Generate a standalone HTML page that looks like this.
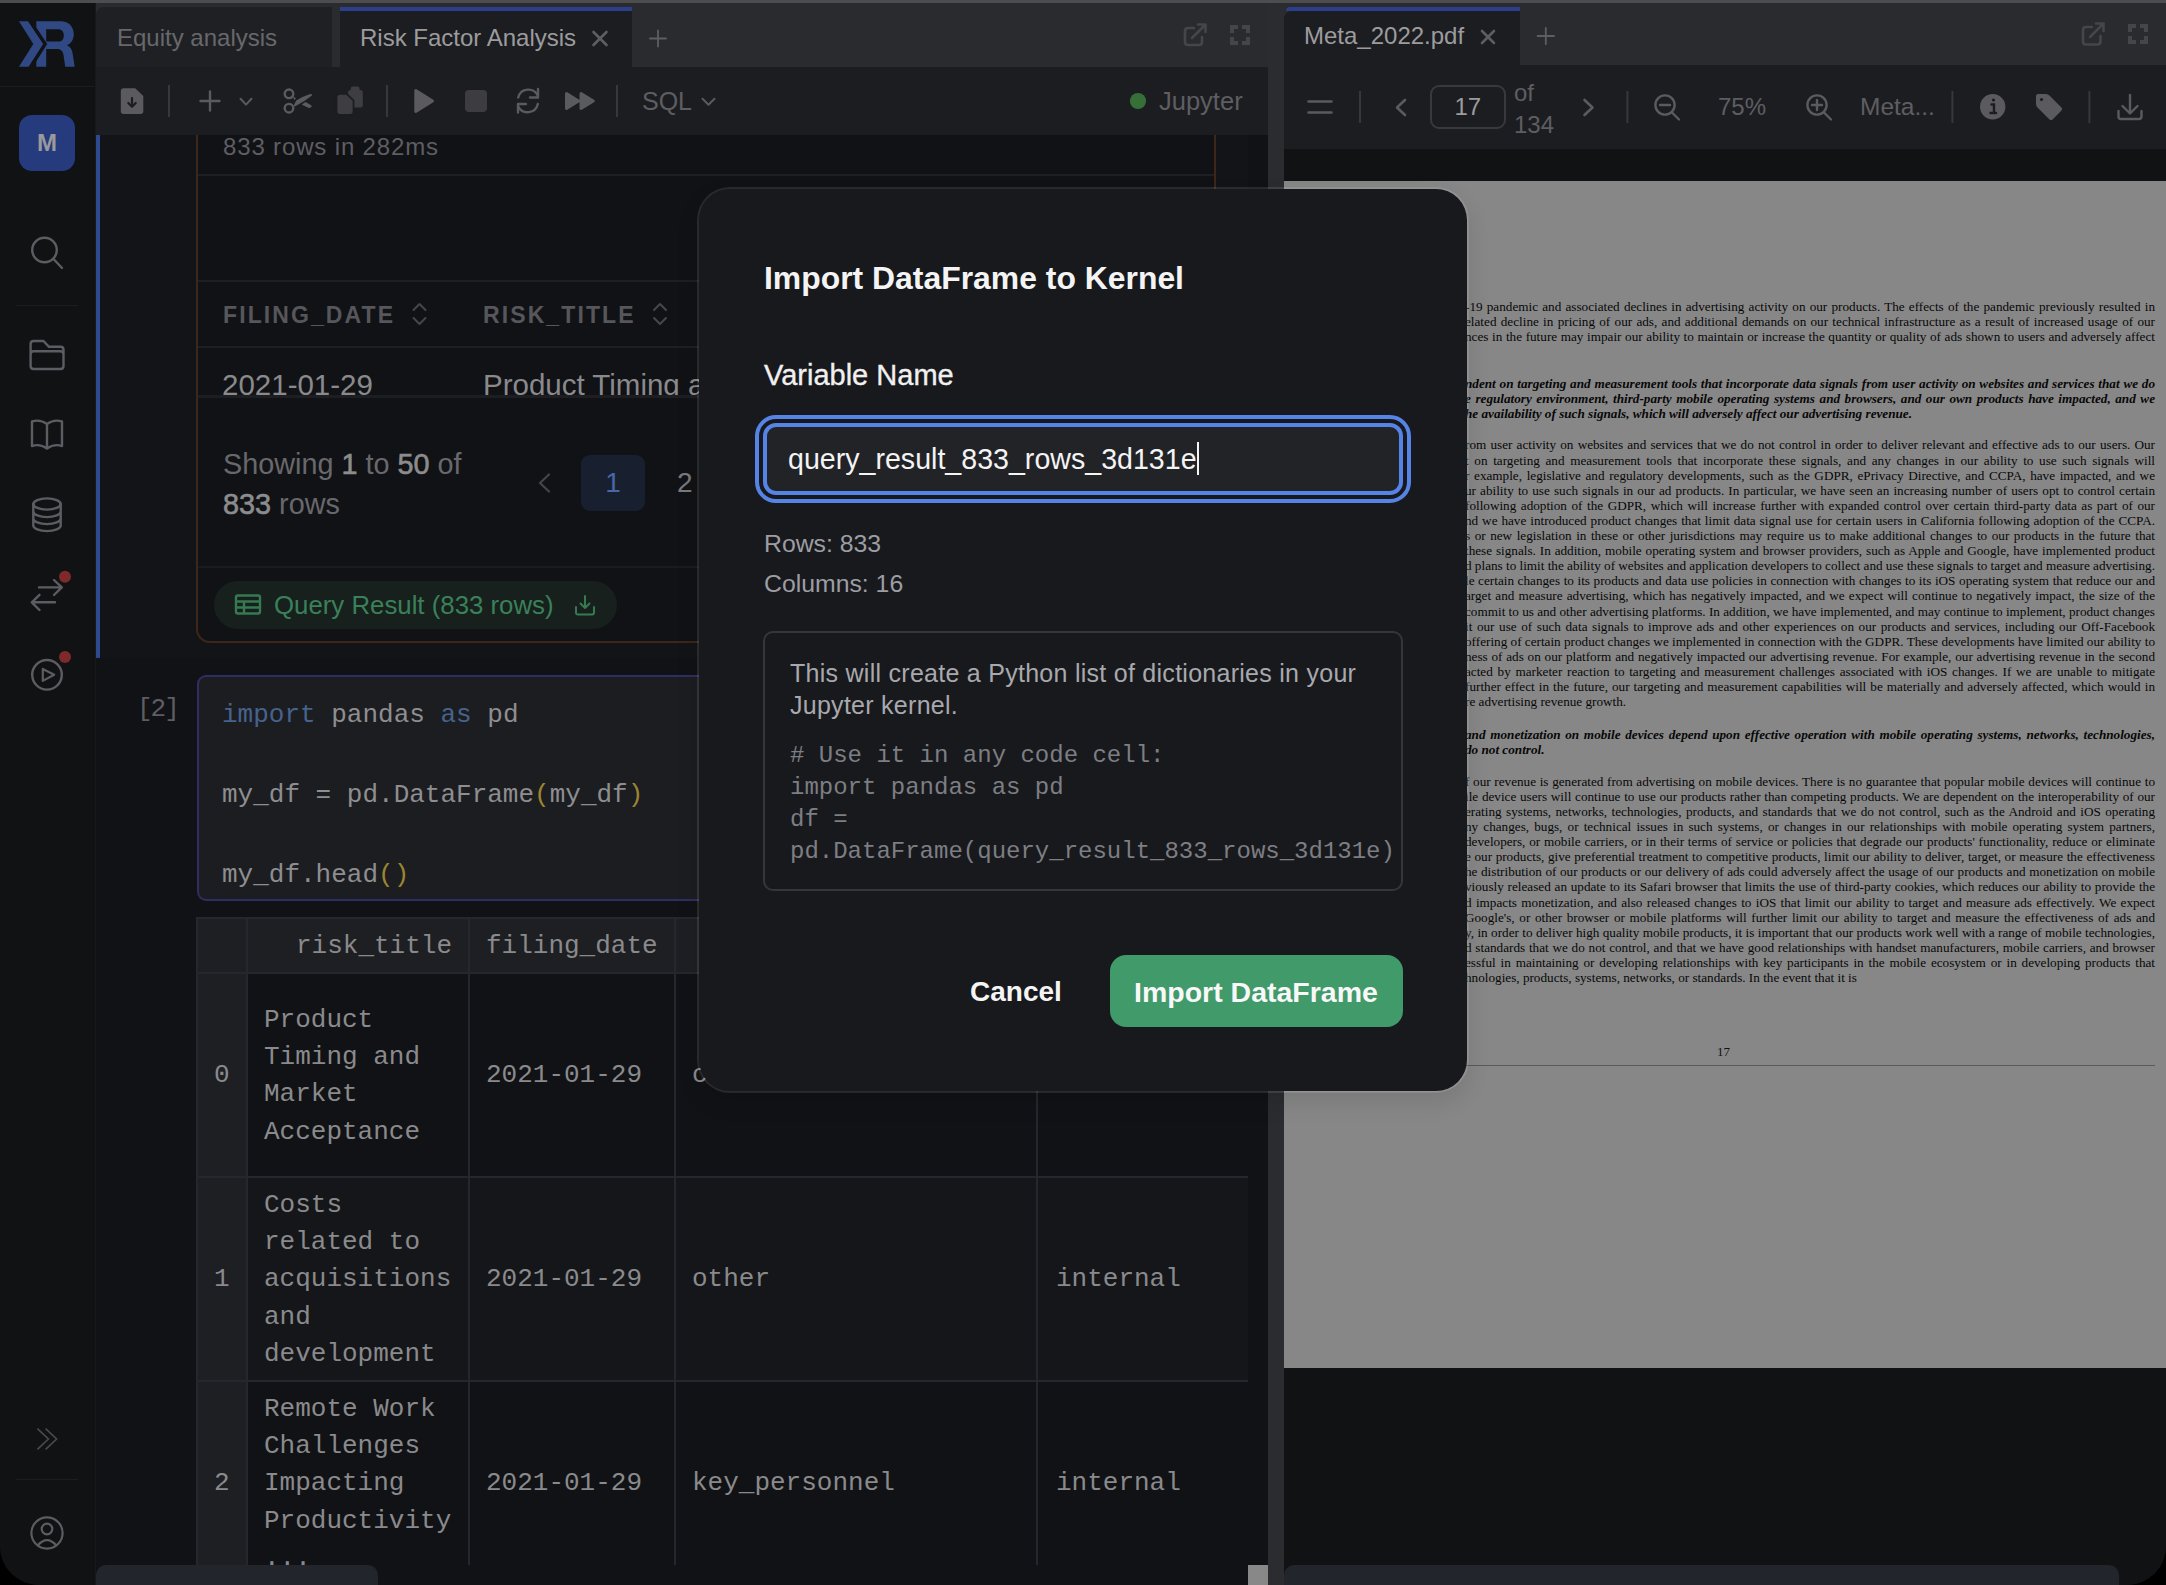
<!DOCTYPE html>
<html><head><meta charset="utf-8">
<style>
*{box-sizing:border-box;margin:0;padding:0}
html,body{width:2166px;height:1585px;overflow:hidden;background:#000;font-family:"Liberation Sans",sans-serif}
.a{position:absolute}
.mono{font-family:"Liberation Mono",monospace}
.serif{font-family:"Liberation Serif",serif}
svg{position:absolute;overflow:visible}
#win{position:absolute;left:0;top:0;width:2166px;height:1585px;background:#111214;border-radius:0 0 39px 39px;overflow:hidden}
.pdfl{position:absolute;left:1465px;width:690px;height:15px;word-spacing:-1px;font:13.2px/15px "Liberation Serif",serif;color:#080808;white-space:normal;text-align:justify;text-align-last:justify}
.pdfl.e{text-align-last:left;text-align:left;word-spacing:0}
.pdfl.bi{font-weight:bold;font-style:italic}
.dt{position:absolute;font:26px/37.4px "Liberation Mono",monospace;color:#8a8a8c;white-space:pre}
</style></head><body>
<div id="win">
 <!-- top strip -->
 <div class="a" style="left:0;top:0;width:2166px;height:3px;background:#4d4d4f"></div>
 <!-- SIDEBAR -->
 <div class="a" style="left:0;top:3px;width:96px;height:1582px;background:#111214;border-right:1px solid #18191c"></div>
 <div class="a" style="left:0;top:86px;width:94px;height:1px;background:#1c1d20"></div>
 <div class="a" style="left:16px;top:305px;width:62px;height:1px;background:#1c1d20"></div>
 <div class="a" style="left:16px;top:1479px;width:62px;height:1px;background:#1c1d20"></div>
 <svg width="96" height="1585" style="left:0;top:0">
  <g fill="#304884">
   <path d="M19.05,21.26 H27.9 L42.9,44 L28.55,66.76 H19.05 L33.4,44 Z" stroke="#111214" stroke-width="7" paint-order="stroke" stroke-linejoin="miter"/>
  </g>
  <path fill="#304884" fill-rule="evenodd" d="M36.3,21.26 H60.8 C68.5,21.26 73.8,26.5 73.8,34.2 C73.8,39.8 70.8,43.5 67,45.3 C70.6,47.2 72.3,50 72.7,54 L74.7,66.76 H65.2 L63.6,55.5 C63.1,51.3 61,49.1 57.2,49.1 H46.2 V66.76 H36.3 Z M46.2,29.2 H58.3 C61.8,29.2 63.8,31.6 63.8,35.4 C63.8,39.3 61.8,41.6 58.3,41.6 H46.2 Z"/>
  <path d="M19.05,21.26 H27.9 L42.9,44 L28.55,66.76 H19.05 L33.4,44 Z" fill="none" stroke="#111214" stroke-width="3.6" transform="translate(2.2,0)"/>
  <path d="M19.05,21.26 H27.9 L42.9,44 L28.55,66.76 H19.05 L33.4,44 Z" fill="#304884"/>
  <rect x="19" y="115" width="56" height="56" rx="13" fill="#263a7e"/>
  <g fill="none" stroke="#5c5c62" stroke-width="2.4" stroke-linecap="round" stroke-linejoin="round">
   <circle cx="44.5" cy="250" r="12.3"/>
   <path d="M53.5,259 L62,268"/>
   <path d="M30.6,366 V344 Q30.6,341 33.6,341 H43.5 L49,346.8 H60.5 Q63.5,346.8 63.5,349.8 V366 Q63.5,369 60.5,369 H33.6 Q30.6,369 30.6,366 Z M30.6,354.3 Q30.6,351.3 33.6,351.3 H60.5 Q63.5,351.3 63.5,354.3"/>
   <path d="M32,421.5 V446 Q40,443.5 47,448.5 Q54,443.5 62,446 V421.5 Q54,419 47,424 Q40,419 32,421.5 Z M47,424 V448"/>
   <ellipse cx="47" cy="504" rx="13.7" ry="5.6"/>
   <path d="M33.3,504 V525.5 M60.7,504 V525.5 M33.3,511.5 A13.7,5.6 0 0 0 60.7,511.5 M33.3,518.5 A13.7,5.6 0 0 0 60.7,518.5 M33.3,525.5 A13.7,5.6 0 0 0 60.7,525.5"/>
   <path d="M39,587.4 H61.5 M54,580 L61.8,587.4 L54,595 M31.8,602.3 H55 M39.5,594.8 L31.8,602.3 L39.5,610"/>
   <circle cx="47" cy="674.8" r="14.8"/>
   <path d="M42.8,668.9 L54.2,674.8 L42.8,680.9 Z" stroke-width="2.2"/>
   <circle cx="47" cy="1533" r="15.6" stroke-width="2.2"/>
   <circle cx="47" cy="1529" r="5.3" stroke-width="2.2"/>
   <path d="M37.8,1545.3 Q47,1535 56.2,1545.3" stroke-width="2.2"/>
  </g>
  <path d="M37.4,1428.7 L48.4,1439 L37.4,1449.3 M45.6,1428.7 L56.6,1439 L45.6,1449.3" fill="none" stroke="#4a4a50" stroke-width="1.6"/>
  <circle cx="65" cy="576.8" r="6" fill="#7e2a2a"/>
  <circle cx="65" cy="657" r="6" fill="#7e2a2a"/>
 </svg>
 <div class="a" style="left:19px;top:115px;width:56px;height:56px;line-height:56px;text-align:center;font:bold 24px/56px 'Liberation Sans',sans-serif;color:#9a9a9c">M</div>

 <!-- LEFT PANE -->
 <div class="a" style="left:96px;top:3px;width:1172px;height:64px;background:#2a2b2f"></div>
 <div class="a" style="left:96px;top:67px;width:1172px;height:68px;background:#1c1d20"></div>
 <div class="a" style="left:96px;top:135px;width:1172px;height:1450px;background:#121316"></div>
 <!-- RIGHT PANE -->
 <div class="a" style="left:1284px;top:3px;width:882px;height:62px;background:#2a2b2f"></div>
 <div class="a" style="left:1284px;top:65px;width:882px;height:84px;background:#1c1d20"></div>
 <div class="a" style="left:1284px;top:149px;width:882px;height:1436px;background:#111214"></div>
 <div class="a" style="left:1284px;top:181px;width:882px;height:1187px;background:#878787"></div>
 <!-- left tabs -->
 <div class="a" style="left:96px;top:7px;width:236px;height:60px;background:#1f2024;border-top-left-radius:8px"></div>
 <div class="a" style="left:117px;top:23px;font-size:24px;line-height:30px;color:#68686c;white-space:nowrap">Equity analysis</div>
 <div class="a" style="left:340px;top:11px;width:292px;height:56px;background:#1c1d21"></div>
 <div class="a" style="left:340px;top:7px;width:292px;height:4px;background:#2b3f8c"></div>
 <div class="a" style="left:360px;top:23px;font-size:24px;line-height:30px;color:#9c9c9e;white-space:nowrap">Risk Factor Analysis</div>
 <svg width="2166" height="200" style="left:0;top:0">
  <g fill="none" stroke="#5e5e62" stroke-linecap="round">
   <path d="M593.5,32 L606.5,45 M606.5,32 L593.5,45" stroke-width="2.6"/>
   <path d="M650,38.5 H666 M658,30.5 V46.5" stroke-width="1.8"/>
   <path d="M1537.6,36 H1554 M1545.8,27.8 V44.2" stroke-width="1.8"/>
   <path d="M1482,31 L1494,43 M1494,31 L1482,43" stroke-width="2.2"/>
  </g>
  <!-- popout / fullscreen left -->
  <g fill="none" stroke="#464649" stroke-width="2.6" stroke-linecap="round" stroke-linejoin="round">
   <path d="M1194,28 H1188 Q1185,28 1185,31 V42 Q1185,45 1188,45 H1199 Q1202,45 1202,42 V37"/>
   <path d="M1192,38 L1205,25 M1198,24.5 H1205.5 V32"/>
   <path d="M2092,27 H2086 Q2083,27 2083,30 V41.5 Q2083,44.5 2086,44.5 H2097.5 Q2100.5,44.5 2100.5,41.5 V36"/>
   <path d="M2090,37 L2103,24 M2096,23.5 H2103.5 V31"/>
  </g>
  <g fill="#464649">
   <path d="M1230,25 H1238 V29 H1234 V33 H1230 Z M1250,25 H1242 V29 H1246 V33 H1250 Z M1230,45 H1238 V41 H1234 V37 H1230 Z M1250,45 H1242 V41 H1246 V37 H1250 Z"/>
   <path d="M2128,24 H2136 V28 H2132 V32 H2128 Z M2148,24 H2140 V28 H2144 V32 H2148 Z M2128,44 H2136 V40 H2132 V36 H2128 Z M2148,44 H2140 V40 H2144 V36 H2148 Z"/>
  </g>
  <!-- left toolbar -->
  <path fill="#5a5a5f" d="M123.5,88.2 H135.2 L143.3,96 V111.2 Q143.3,113.9 140.6,113.9 H123.5 Q120.8,113.9 120.8,111.2 V91 Q120.8,88.2 123.5,88.2 Z"/>
  <path fill="none" stroke="#1c1d20" stroke-width="2.2" stroke-linecap="round" stroke-linejoin="round" d="M132,98 V106.5 M128.3,103 L132,106.7 L135.7,103"/>
  <g stroke="#38383c" stroke-width="2"><path d="M169,85 V117 M387,85 V117 M617,85 V117"/><path d="M1360,91 V123 M1627.4,91 V123 M1952.4,91 V123 M2089.4,91 V123"/></g>
  <g fill="none" stroke="#5a5a5f" stroke-linecap="round" stroke-linejoin="round">
   <path d="M200.5,101 H219.5 M210,91.5 V110.5" stroke-width="2.4"/>
   <path d="M240.5,98.8 L246,104.6 L251.5,98.8" stroke-width="2"/>
   <circle cx="289" cy="93.8" r="4.3" stroke-width="2.4"/>
   <circle cx="289" cy="108.2" r="4.3" stroke-width="2.4"/>
  </g>
  <path fill="#5a5a5f" d="M293.8,105.6 L296.2,100.6 Q302,96.5 309.5,94.2 Q312,93.8 312.3,95.2 Q305,101 294.9,106.6 Z M301.7,104.6 L305.5,102.1 Q309.5,104 312,106 Q311,108 308.8,107.9 Q305,106.5 301.7,104.6 Z M293,96 L296,98.5 L294,100 Z"/>
  <path fill="#3d3d42" d="M350.5,89.9 H360.3 Q362.8,89.9 362.8,92.4 V105 Q362.8,107.5 360.3,107.5 H350.5 Q348,107.5 348,105 V92.4 Q348,89.9 350.5,89.9 Z M352.8,86.5 H357.6 Q359.6,86.5 359.6,88.5 V91 H350.8 V88.5 Q350.8,86.5 352.8,86.5 Z"/>
  <path fill="#3d3d42" stroke="#1c1d20" stroke-width="3.6" paint-order="stroke" d="M339.9,94.8 H346.2 L352.6,100.8 V111.4 Q352.6,113.9 350.1,113.9 H339.9 Q337.4,113.9 337.4,111.4 V97.3 Q337.4,94.8 339.9,94.8 Z"/>
  <path fill="#5a5a5f" stroke="#5a5a5f" stroke-width="3" stroke-linejoin="round" d="M415.8,90.5 L432.5,101 L415.8,111.5 Z"/>
  <rect x="465" y="89.9" width="22" height="22" rx="4" fill="#3c3c41"/>
  <g fill="none" stroke="#5a5a5f" stroke-width="2.4" stroke-linecap="round" stroke-linejoin="round">
   <path d="M518.2,97.5 A10.5,10.5 0 0 1 537.8,95.5"/>
   <path d="M537.8,104 A10.5,10.5 0 0 1 518.2,106.5"/>
   <path d="M538,89 V97.5 H530"/>
   <path d="M518,112.5 V104 H526"/>
  </g>
  <path fill="#5a5a5f" stroke="#5a5a5f" stroke-width="3" stroke-linejoin="round" d="M566.5,93.5 L578.5,101 L566.5,108.5 Z M581,93.5 L593.3,101 L581,108.5 Z"/>
  <path fill="none" stroke="#5a5a5f" stroke-width="2" stroke-linecap="round" stroke-linejoin="round" d="M702.5,98.8 L708.5,104.8 L714.5,98.8"/>
  <circle cx="1138" cy="101" r="8.1" fill="#367038"/>
 </svg>
 <div class="a" style="left:642px;top:86px;font-size:25px;line-height:30px;color:#5e5e62;white-space:nowrap">SQL</div>
 <div class="a" style="left:1159px;top:86px;font-size:25.5px;line-height:30px;color:#5e5e62;white-space:nowrap">Jupyter</div>
 <!-- notebook -->
 <div class="a" style="left:96px;top:135px;width:1172px;height:1450px;background:#111215"></div>
 <div class="a" style="left:96px;top:135px;width:1152px;height:523px;background:#131418"></div>
 <div class="a" style="left:96px;top:135px;width:4px;height:523px;background:#2e4a8e"></div>
 <!-- sql cell box -->
 <div class="a" style="left:196px;top:135px;width:1020px;height:508px;border:2px solid #3e2618;border-top:none;border-radius:0 0 14px 14px;background:#111216"></div>
 <div class="a" style="left:223px;top:133px;font-size:24px;line-height:28px;color:#5e5e62;white-space:nowrap;letter-spacing:0.85px">833 rows in 282ms</div>
 <div class="a" style="left:198px;top:174px;width:1016px;height:2px;background:#1e1f23"></div>
 <div class="a" style="left:198px;top:280px;width:1016px;height:2px;background:#1e1f23"></div>
 <div class="a" style="left:198px;top:346px;width:1016px;height:2px;background:#1e1f23"></div>
 <div class="a" style="left:223px;top:301px;font:bold 23px/28px 'Liberation Sans',sans-serif;letter-spacing:2.1px;color:#56565b;white-space:nowrap">FILING_DATE</div>
 <div class="a" style="left:483px;top:301px;font:bold 23px/28px 'Liberation Sans',sans-serif;letter-spacing:2.1px;color:#56565b;white-space:nowrap">RISK_TITLE</div>
 <svg width="1300" height="700" style="left:0;top:0">
  <g fill="none" stroke="#46464b" stroke-width="2" stroke-linecap="round" stroke-linejoin="round">
   <path d="M413.5,310 L419.5,304 L425.5,310 M413.5,318 L419.5,324 L425.5,318"/>
   <path d="M654,310 L660,304 L666,310 M654,318 L660,324 L666,318"/>
  </g>
 </svg>
 <div class="a" style="left:222px;top:368px;font-size:29.5px;line-height:34px;color:#8a8a8c;white-space:nowrap">2021-01-29</div>
 <div class="a" style="left:483px;top:368px;font-size:29.5px;line-height:34px;color:#8a8a8c;white-space:nowrap">Product Timing and Market</div>
 <div class="a" style="left:198px;top:396px;width:1016px;height:171px;background:#111215"></div>
 <div class="a" style="left:198px;top:395px;width:1016px;height:3px;background:#1d1e22"></div>
 <svg width="700" height="700" style="left:0;top:0"><path d="M549,474.5 L540,483 L549,491.5" fill="none" stroke="#45454a" stroke-width="2.2" stroke-linecap="round" stroke-linejoin="round"/></svg>
 <div class="a" style="left:223px;top:444px;font-size:28.8px;line-height:40px;color:#68686c;white-space:nowrap">Showing <b style="color:#8c8c8e;font-weight:normal;-webkit-text-stroke:0.6px #8c8c8e">1</b> to <b style="color:#8c8c8e;font-weight:normal;-webkit-text-stroke:0.6px #8c8c8e">50</b> of<br><b style="color:#8c8c8e;font-weight:normal;-webkit-text-stroke:0.6px #8c8c8e">833</b> rows</div>
 <div class="a" style="left:581px;top:455px;width:64px;height:56px;background:#182030;border-radius:9px"></div>
 <div class="a" style="left:581px;top:466px;width:64px;text-align:center;font-size:28px;line-height:34px;color:#4866a8">1</div>
 <div class="a" style="left:677px;top:466px;font-size:28px;line-height:34px;color:#7a7a7e">2</div>
 <div class="a" style="left:198px;top:566px;width:1016px;height:2px;background:#1a1b1f"></div>
 <div class="a" style="left:214px;top:581px;width:403px;height:48px;background:#17201c;border-radius:24px"></div>
 <svg width="700" height="700" style="left:0;top:0">
  <g fill="none" stroke="#367a52" stroke-width="2.4">
   <rect x="236" y="595.5" width="24" height="18" rx="2"/>
   <path d="M236,601.5 H260 M236,607.5 H260 M244,601.5 V613.5"/>
   <path d="M585,596 V608 M580.5,603.5 L585,608 L589.5,603.5 M576,607 V612.5 Q576,614.5 578,614.5 H592 Q594,614.5 594,612.5 V607" stroke-linecap="round" stroke-linejoin="round" stroke-width="2"/>
  </g>
 </svg>
 <div class="a" style="left:274px;top:590px;font-size:25.8px;line-height:30px;color:#3a805a;white-space:nowrap">Query Result (833 rows)</div>

 <!-- code cell -->
 <div class="a" style="left:137px;top:694px;font:26px/30px 'Liberation Mono',monospace;color:#5e5e62;white-space:pre;letter-spacing:-2px">[2]</div>
 <div class="a" style="left:197px;top:675px;width:1051px;height:226px;background:#1c1d21;border:2px solid #2e2e62;border-radius:9px"></div>
 <div class="a mono" style="left:222px;top:694.5px;font-size:26px;line-height:40px;color:#8e8e90;white-space:pre"><span style="color:#45638c">import</span> pandas <span style="color:#45638c">as</span> pd

my_df = pd.DataFrame<span style="color:#9c8530">(</span>my_df<span style="color:#9c8530">)</span>

my_df.head<span style="color:#9c8530">()</span></div>

 <!-- df table -->
 <div class="a" style="left:196px;top:917px;width:1052px;height:648px;background:#111215"></div>
 <div class="a" style="left:196px;top:917px;width:1052px;height:57px;background:#1e1f23"></div>
 <div class="a" style="left:196px;top:917px;width:51px;height:648px;background:#1e1f23"></div>
 <div class="a" style="left:196px;top:917px;width:1052px;height:2px;background:#26272e"></div>
 <div class="a" style="left:196px;top:972px;width:1052px;height:2px;background:#26272e"></div>
 <div class="a" style="left:196px;top:1176px;width:1052px;height:2px;background:#26272e"></div>
 <div class="a" style="left:196px;top:1380px;width:1052px;height:2px;background:#26272e"></div>
 <div class="a" style="left:248px;top:1178px;width:1000px;height:202px;background:#151619"></div>
 <div class="a" style="left:196px;top:917px;width:2px;height:648px;background:#26272e"></div>
 <div class="a" style="left:246px;top:917px;width:2px;height:648px;background:#26272e"></div>
 <div class="a" style="left:468px;top:917px;width:2px;height:648px;background:#26272e"></div>
 <div class="a" style="left:674px;top:917px;width:2px;height:648px;background:#26272e"></div>
 <div class="a" style="left:1036px;top:917px;width:2px;height:648px;background:#26272e"></div>
 <div class="dt" style="left:296px;top:927.5px">risk_title</div>
 <div class="dt" style="left:486px;top:927.5px">filing_date</div>
 <div class="dt" style="left:214px;top:1056.5px">0</div>
 <div class="dt" style="left:264px;top:1001.5px">Product
Timing and
Market
Acceptance</div>
 <div class="dt" style="left:486px;top:1056.5px">2021-01-29</div>
 <div class="dt" style="left:692px;top:1056.5px">competition</div>
 <div class="dt" style="left:214px;top:1260.5px">1</div>
 <div class="dt" style="left:264px;top:1186.5px">Costs
related to
acquisitions
and
development</div>
 <div class="dt" style="left:486px;top:1260.5px">2021-01-29</div>
 <div class="dt" style="left:692px;top:1260.5px">other</div>
 <div class="dt" style="left:1056px;top:1260.5px">internal</div>
 <div class="dt" style="left:214px;top:1464.5px">2</div>
 <div class="dt" style="left:264px;top:1390.5px">Remote Work
Challenges
Impacting
Productivity
...</div>
 <div class="dt" style="left:486px;top:1464.5px">2021-01-29</div>
 <div class="dt" style="left:692px;top:1464.5px">key_personnel</div>
 <div class="dt" style="left:1056px;top:1464.5px">internal</div>
 <div class="a" style="left:96px;top:1565px;width:1152px;height:20px;background:#111215"></div>
 <div class="a" style="left:96px;top:1565px;width:282px;height:20px;background:#23252d;border-radius:10px 10px 0 0"></div>
 <div class="a" style="left:1248px;top:1565px;width:20px;height:20px;background:#888"></div>
 <!-- gutter -->
 <div class="a" style="left:1268px;top:3px;width:16px;height:1582px;background:#2b2c30"></div>

 <!-- pdf text -->
 <div class="pdfl" style="top:299.1px">-19 pandemic and associated declines in advertising activity on our products. The effects of the pandemic previously resulted in</div>
 <div class="pdfl" style="top:314.2px">elated decline in pricing of our ads, and additional demands on our technical infrastructure as a result of increased usage of our</div>
 <div class="pdfl" style="top:329.3px">nces in the future may impair our ability to maintain or increase the quantity or quality of ads shown to users and adversely affect</div>
 <div class="pdfl bi" style="top:375.7px">ndent on targeting and measurement tools that incorporate data signals from user activity on websites and services that we do</div>
 <div class="pdfl bi" style="top:390.7px">e regulatory environment, third-party mobile operating systems and browsers, and our own products have impacted, and we</div>
 <div class="pdfl bi e" style="top:405.7px">he availability of such signals, which will adversely affect our advertising revenue.</div>
 <div class="pdfl" style="top:437.4px">rom user activity on websites and services that we do not control in order to deliver relevant and effective ads to our users. Our</div>
 <div class="pdfl" style="top:452.5px">t on targeting and measurement tools that incorporate these signals, and any changes in our ability to use such signals will</div>
 <div class="pdfl" style="top:467.6px">r example, legislative and regulatory developments, such as the GDPR, ePrivacy Directive, and CCPA, have impacted, and we</div>
 <div class="pdfl" style="top:482.7px">ur ability to use such signals in our ad products. In particular, we have seen an increasing number of users opt to control certain</div>
 <div class="pdfl" style="top:497.8px">following adoption of the GDPR, which will increase further with expanded control over certain third-party data as part of our</div>
 <div class="pdfl" style="top:512.9px">nd we have introduced product changes that limit data signal use for certain users in California following adoption of the CCPA.</div>
 <div class="pdfl" style="top:528.0px">s or new legislation in these or other jurisdictions may require us to make additional changes to our products in the future that</div>
 <div class="pdfl" style="top:543.1px">these signals. In addition, mobile operating system and browser providers, such as Apple and Google, have implemented product</div>
 <div class="pdfl" style="top:558.2px">d plans to limit the ability of websites and application developers to collect and use these signals to target and measure advertising.</div>
 <div class="pdfl" style="top:573.3px">le certain changes to its products and data use policies in connection with changes to its iOS operating system that reduce our and</div>
 <div class="pdfl" style="top:588.4px">arget and measure advertising, which has negatively impacted, and we expect will continue to negatively impact, the size of the</div>
 <div class="pdfl" style="top:603.5px">commit to us and other advertising platforms. In addition, we have implemented, and may continue to implement, product changes</div>
 <div class="pdfl" style="top:618.6px">it our use of such data signals to improve ads and other experiences on our products and services, including our Off-Facebook</div>
 <div class="pdfl" style="top:633.7px">offering of certain product changes we implemented in connection with the GDPR. These developments have limited our ability to</div>
 <div class="pdfl" style="top:648.8px">ness of ads on our platform and negatively impacted our advertising revenue. For example, our advertising revenue in the second</div>
 <div class="pdfl" style="top:663.9px">acted by marketer reaction to targeting and measurement challenges associated with iOS changes. If we are unable to mitigate</div>
 <div class="pdfl" style="top:679.0px">further effect in the future, our targeting and measurement capabilities will be materially and adversely affected, which would in</div>
 <div class="pdfl e" style="top:694.1px">re advertising revenue growth.</div>
 <div class="pdfl bi" style="top:726.8px">and monetization on mobile devices depend upon effective operation with mobile operating systems, networks, technologies,</div>
 <div class="pdfl bi e" style="top:741.9px">do not control.</div>
 <div class="pdfl" style="top:773.7px">f our revenue is generated from advertising on mobile devices. There is no guarantee that popular mobile devices will continue to</div>
 <div class="pdfl" style="top:788.8px">ile device users will continue to use our products rather than competing products. We are dependent on the interoperability of our</div>
 <div class="pdfl" style="top:803.9px">erating systems, networks, technologies, products, and standards that we do not control, such as the Android and iOS operating</div>
 <div class="pdfl" style="top:819.0px">ny changes, bugs, or technical issues in such systems, or changes in our relationships with mobile operating system partners,</div>
 <div class="pdfl" style="top:834.1px">developers, or mobile carriers, or in their terms of service or policies that degrade our products&#39; functionality, reduce or eliminate</div>
 <div class="pdfl" style="top:849.2px">e our products, give preferential treatment to competitive products, limit our ability to deliver, target, or measure the effectiveness</div>
 <div class="pdfl" style="top:864.3px">he distribution of our products or our delivery of ads could adversely affect the usage of our products and monetization on mobile</div>
 <div class="pdfl" style="top:879.4px">viously released an update to its Safari browser that limits the use of third-party cookies, which reduces our ability to provide the</div>
 <div class="pdfl" style="top:894.5px">d impacts monetization, and also released changes to iOS that limit our ability to target and measure ads effectively. We expect</div>
 <div class="pdfl" style="top:909.6px">Google&#39;s, or other browser or mobile platforms will further limit our ability to target and measure the effectiveness of ads and</div>
 <div class="pdfl" style="top:924.7px">y, in order to deliver high quality mobile products, it is important that our products work well with a range of mobile technologies,</div>
 <div class="pdfl" style="top:939.8px">d standards that we do not control, and that we have good relationships with handset manufacturers, mobile carriers, and browser</div>
 <div class="pdfl" style="top:954.9px">essful in maintaining or developing relationships with key participants in the mobile ecosystem or in developing products that</div>
 <div class="pdfl e" style="top:970.0px">hnologies, products, systems, networks, or standards. In the event that it is</div>
 <div class="a" style="left:1717px;top:1044px;font:13px/15px 'Liberation Serif',serif;color:#121212">17</div>
 <div class="a" style="left:1290px;top:1065px;width:865px;height:1px;background:#5a5a5a"></div>
 <!-- right tab -->
 <div class="a" style="left:1284px;top:11px;width:236px;height:54px;background:#1c1d21;border-top-left-radius:8px"></div>
 <div class="a" style="left:1286px;top:7px;width:234px;height:4px;background:#2b3f8c;border-top-left-radius:4px"></div>
 <div class="a" style="left:1304px;top:21px;font-size:24px;line-height:30px;color:#9c9c9e;white-space:nowrap">Meta_2022.pdf</div>
 <svg width="40" height="40" style="left:1470px;top:20px"><path d="M12,11 L24,23 M24,11 L12,23" fill="none" stroke="#5e5e62" stroke-width="2.6" stroke-linecap="round"/></svg>
 <!-- right toolbar -->
 <svg width="2166" height="200" style="left:0;top:0">
  <g fill="none" stroke="#5a5a5f" stroke-width="2.6" stroke-linecap="round" stroke-linejoin="round">
   <path d="M1308.5,101.5 H1331.5 M1308.5,112.5 H1331.5"/>
   <path d="M1405,100 L1397,107.5 L1405,115"/>
   <path d="M1584.5,100 L1592.5,107.5 L1584.5,115"/>
   <circle cx="1665" cy="105" r="9.6" stroke-width="2.4"/>
   <path d="M1672,112.5 L1679,119.5 M1660,105 H1670" stroke-width="2.4"/>
   <circle cx="1817" cy="105" r="9.6" stroke-width="2.4"/>
   <path d="M1824,112.5 L1831,119.5 M1812,105 H1822 M1817,100 V110" stroke-width="2.4"/>
   <path d="M2130,95 V113 M2122.5,106 L2130,113.5 L2137.5,106 M2118.5,111 V116.5 Q2118.5,119 2121,119 H2139 Q2141.5,119 2141.5,116.5 V111" stroke-width="2.4"/>
  </g>
  <circle cx="1992.7" cy="106.7" r="12.7" fill="#5a5a5f"/>
  <path d="M1991.5,104.5 H1994 V113 M1990.5,113 H1996" fill="none" stroke="#1c1d20" stroke-width="2.4" stroke-linecap="round"/>
  <circle cx="1993.5" cy="100" r="1.6" fill="#1c1d20"/>
  <path fill="#5a5a5f" d="M2036,97 Q2035.5,94 2038.5,94 H2046 Q2048,94 2049.5,95.5 L2061.5,107.5 Q2063,109 2061.5,110.5 L2052.5,119.5 Q2051,121 2049.5,119.5 L2037.5,107.5 Q2036,106 2036,104 Z"/>
  <circle cx="2041.5" cy="99.5" r="1.6" fill="#1c1d20"/>
 </svg>
 <div class="a" style="left:1430px;top:85px;width:75.5px;height:44px;border:2px solid #38393d;border-radius:9px"></div>
 <div class="a" style="left:1430px;top:92px;width:75.5px;text-align:center;font-size:24px;line-height:30px;color:#9c9c9e">17</div>
 <div class="a" style="left:1514px;top:77px;font-size:24px;line-height:32px;color:#5e5e62;white-space:nowrap">of<br>134</div>
 <div class="a" style="left:1718px;top:92px;font-size:24px;line-height:30px;color:#5e5e62;white-space:nowrap">75%</div>
 <div class="a" style="left:1860px;top:92px;font-size:24.5px;line-height:30px;color:#5e5e62;white-space:nowrap">Meta...</div>

 <div class="a" style="left:1284px;top:1565px;width:835px;height:20px;background:#23252d;border-radius:10px 10px 0 0"></div>
 <!-- DIALOG -->
 <div class="a" style="left:697px;top:187px;width:772px;height:906px;background:#18191c;border:2px solid rgba(255,255,255,0.1);background-clip:padding-box;border-radius:33px;box-shadow:0 10px 22px rgba(0,0,0,0.1)"></div>
 <div class="a" style="left:764px;top:260px;font:bold 31.9px/36px 'Liberation Sans',sans-serif;color:#f4f4f5;white-space:nowrap">Import DataFrame to Kernel</div>
 <div class="a" style="left:764px;top:358px;font:29px/34px 'Liberation Sans',sans-serif;color:#f0f0f1;white-space:nowrap;-webkit-text-stroke:0.35px #f0f0f1">Variable Name</div>
 <div class="a" style="left:755px;top:415px;width:656px;height:88px;border:4px solid #5683e6;border-radius:21px"></div>
 <div class="a" style="left:763px;top:423px;width:640px;height:72px;border:4px solid #5683e6;border-radius:13px;background:#222327"></div>
 <div class="a" style="left:788px;top:442px;font:28.6px/34px 'Liberation Sans',sans-serif;color:#f4f4f5;white-space:nowrap">query_result_833_rows_3d131e</div>
 <div class="a" style="left:1197px;top:442px;width:2px;height:33px;background:#f4f4f5"></div>
 <div class="a" style="left:764px;top:524px;font:24.8px/40px 'Liberation Sans',sans-serif;color:#9d9ea4;white-space:nowrap">Rows: 833<br>Columns: 16</div>
 <div class="a" style="left:763px;top:631px;width:640px;height:260px;border:2px solid #35363a;border-radius:10px"></div>
 <div class="a" style="left:790px;top:657px;font:25px/32px 'Liberation Sans',sans-serif;letter-spacing:0.27px;color:#a8a9ae;white-space:nowrap">This will create a Python list of dictionaries in your<br>Jupyter kernel.</div>
 <div class="a" style="left:790px;top:740px;font:24px/32px 'Liberation Mono',monospace;color:#7d7e84;white-space:pre"># Use it in any code cell:
import pandas as pd
df =
pd.DataFrame(query_result_833_rows_3d131e)</div>
 <div class="a" style="left:970px;top:975px;font:bold 28px/34px 'Liberation Sans',sans-serif;color:#f4f4f5;white-space:nowrap">Cancel</div>
 <div class="a" style="left:1110px;top:955px;width:293px;height:72px;background:#409a6a;border-radius:16px"></div>
 <div class="a" style="left:1134px;top:975px;font:bold 28.5px/34px 'Liberation Sans',sans-serif;color:#f8f8f8;white-space:nowrap">Import DataFrame</div>
</div>
</body></html>
